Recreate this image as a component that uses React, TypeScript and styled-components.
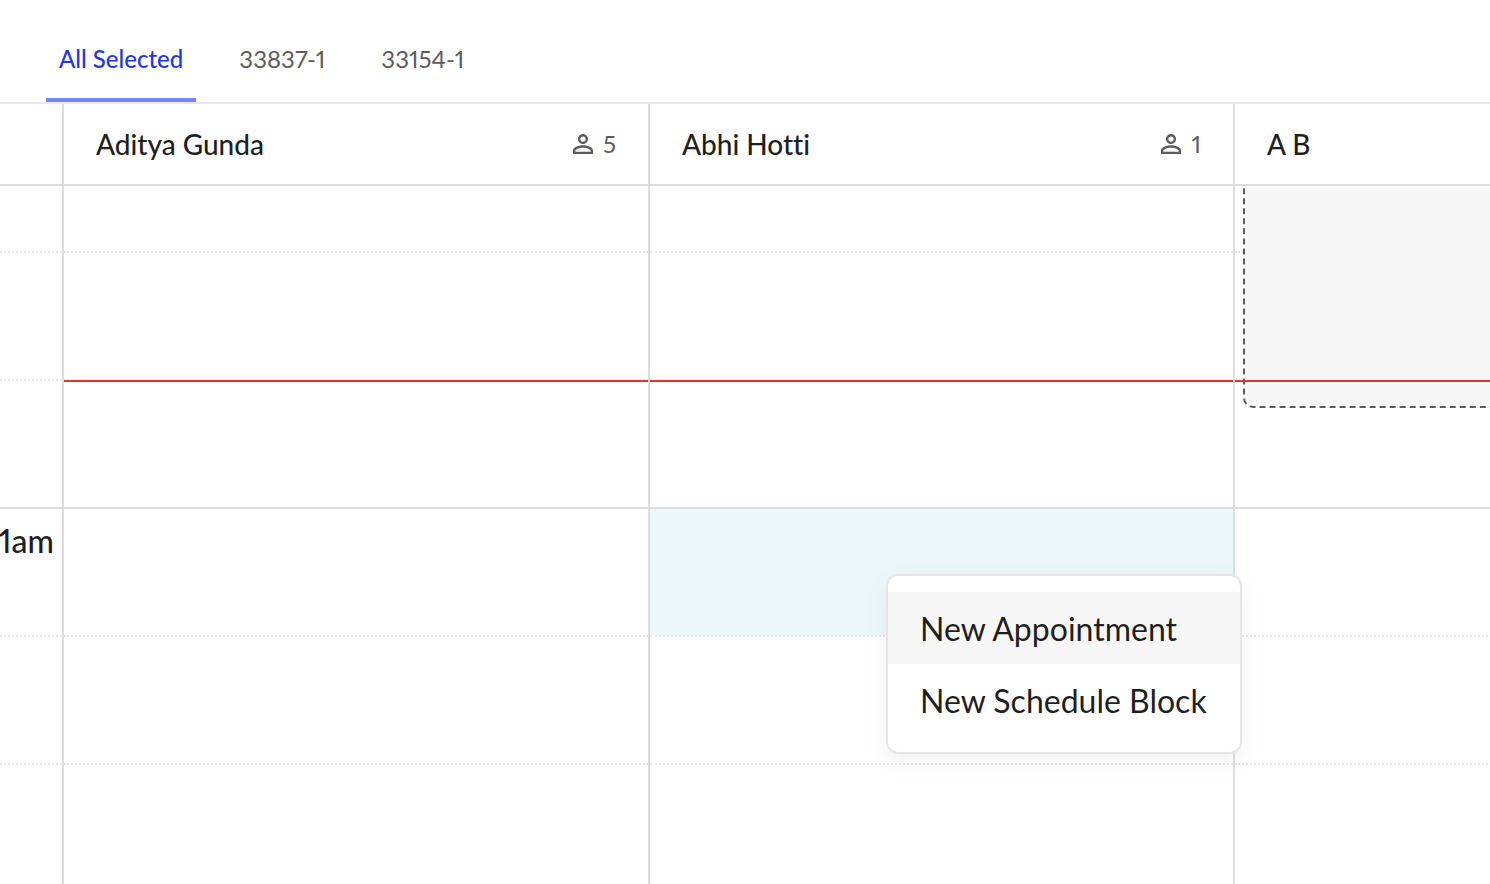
import React from "react";
import styled, { createGlobalStyle } from "styled-components";

const GlobalStyle = createGlobalStyle`
  *, *::before, *::after { box-sizing: border-box; }
  html { overflow: hidden; }
  body {
    margin: 0;
    background: #fff;
    color: #1f1f1f;
    font-family: Lato, "Liberation Sans", sans-serif;
    font-variant-ligatures: none;
    font-variant-numeric: proportional-nums;
  }
`;

const line = "#dddddd";

const Page = styled.main`
  display: flex;
  flex-direction: column;
  min-height: 100vh;
  overflow: hidden;
`;

const TabBar = styled.nav`
  display: flex;
  gap: 30px;
  padding: 0 46px;
  border-bottom: 2px solid #e8e8e8;
`;

const Tab = styled.button<{ $active?: boolean }>`
  padding: 43px 13px 23px;
  border: 0;
  border-bottom: 4px solid ${(p) => (p.$active ? "#7485f2" : "transparent")};
  background: none;
  color: ${(p) => (p.$active ? "#1f38e0" : "#5c5c5c")};
  font: inherit;
  font-variant-numeric: inherit;
  font-weight: ${(p) => (p.$active ? 500 : 400)};
  font-size: 24px;
  line-height: 32px;
  cursor: pointer;
`;

const Board = styled.section`
  flex: 1;
  display: grid;
  grid-template-columns: 64px 586px 585px 586px;
  grid-template-rows: auto 1fr;
  overflow: hidden;
`;

const HeaderCell = styled.header<{ $corner?: boolean }>`
  display: flex;
  align-items: center;
  justify-content: space-between;
  height: 82px;
  padding: 0 ${(p) => (p.$corner ? 0 : 32)}px;
  border-right: 2px solid ${line};
  border-bottom: 2px solid ${line};
`;

const Provider = styled.h2`
  margin: 0;
  font-size: 28px;
  font-weight: 500;
  line-height: 40px;
`;

const Count = styled.span`
  display: flex;
  align-items: center;
  gap: 5px;
  color: #5c5c5c;
  font-size: 24px;
  line-height: 32px;
`;

const Column = styled.div`
  position: relative;
  min-width: 0;
  border-right: 2px solid ${line};
`;

const Slot = styled.div<{ $first?: boolean; $hour?: boolean; $selected?: boolean }>`
  position: relative;
  display: flex;
  justify-content: flex-end;
  height: ${(p) => (p.$first ? 67 : 128)}px;
  border-bottom: 2px ${(p) => (p.$hour ? `solid ${line}` : "dotted #e5e5e5")};
  background: ${(p) => (p.$selected ? "#ebf7f9" : "transparent")};
  background-clip: padding-box;
`;

const HourLabel = styled.time`
  padding: 12px 8px;
  font-size: 32px;
  font-weight: 500;
  line-height: 40px;
`;

const NowLine = styled.div`
  position: absolute;
  top: 194px;
  left: 0;
  right: 0;
  height: 2px;
  background: #eb3223;
`;

const Clip = styled.div`
  position: absolute;
  inset: 0;
  overflow: hidden;
`;

const ScheduleBlock = styled.div`
  position: absolute;
  top: -168px;
  left: 8px;
  right: 8px;
  height: 390px;
  border: 2px dashed #5c5c5c;
  border-radius: 10px;
  background: #f7f7f7;
  background-clip: padding-box;
`;

const Menu = styled.div`
  position: absolute;
  z-index: 2;
  top: 65px;
  left: 236px;
  min-width: 356px;
  padding: 16px 0;
  border: 2px solid #e5e5e5;
  border-radius: 12px;
  background: #fff;
  box-shadow: 0 8px 24px rgba(0, 0, 0, 0.06);
`;

const MenuItem = styled.button<{ $hovered?: boolean }>`
  display: block;
  width: 100%;
  padding: 17px 32px 15px;
  border: 0;
  background: ${(p) => (p.$hovered ? "#f7f7f7" : "#fff")};
  color: inherit;
  font: inherit;
  font-size: 32px;
  line-height: 40px;
  text-align: left;
  white-space: nowrap;
  cursor: pointer;
`;

function PersonIcon() {
  return (
    <svg width="30" height="30" viewBox="0 0 24 24" fill="currentColor" aria-hidden="true">
      <path d="M12 5.9a2.1 2.1 0 1 1 0 4.2 2.1 2.1 0 0 1 0-4.2m0 9c2.97 0 6.1 1.46 6.1 2.1v1.1H5.9V17c0-.64 3.13-2.1 6.1-2.1M12 4C9.79 4 8 5.79 8 8s1.79 4 4 4 4-1.79 4-4-1.79-4-4-4m0 9c-2.67 0-8 1.34-8 4v3h16v-3c0-2.66-5.33-4-8-4" />
    </svg>
  );
}

type ProviderInfo = { name: string; patients?: number; selected?: boolean; blocked?: boolean };

const tabs = ["All Selected", "33837-1", "33154-1"];

const providers: ProviderInfo[] = [
  { name: "Aditya Gunda", patients: 5 },
  { name: "Abhi Hotti", patients: 1, selected: true },
  { name: "A B", blocked: true },
];

const slots = [0, 1, 2, 3, 4];

export default function App() {
  return (
    <>
      <GlobalStyle />
      <Page>
        <TabBar>
          {tabs.map((tab, i) => (
            <Tab key={tab} type="button" $active={i === 0}>
              {tab}
            </Tab>
          ))}
        </TabBar>
        <Board>
          <HeaderCell $corner />
          {providers.map((p) => (
            <HeaderCell key={p.name}>
              <Provider>{p.name}</Provider>
              {p.patients && (
                <Count>
                  <PersonIcon />
                  {p.patients}
                </Count>
              )}
            </HeaderCell>
          ))}
          <Column>
            {slots.map((s) => (
              <Slot key={s} $first={s === 0} $hour={s === 2}>
                {s === 3 && <HourLabel>11am</HourLabel>}
              </Slot>
            ))}
          </Column>
          {providers.map((p) => (
            <Column key={p.name}>
              {slots.map((s) => (
                <Slot key={s} $first={s === 0} $hour={s === 2} $selected={p.selected && s === 3}>
                  {p.selected && s === 3 && (
                    <Menu role="menu">
                      <MenuItem type="button" role="menuitem" $hovered>
                        New Appointment
                      </MenuItem>
                      <MenuItem type="button" role="menuitem">
                        New Schedule Block
                      </MenuItem>
                    </Menu>
                  )}
                </Slot>
              ))}
              {p.blocked && (
                <Clip>
                  <ScheduleBlock />
                </Clip>
              )}
              <NowLine />
            </Column>
          ))}
        </Board>
      </Page>
    </>
  );
}
